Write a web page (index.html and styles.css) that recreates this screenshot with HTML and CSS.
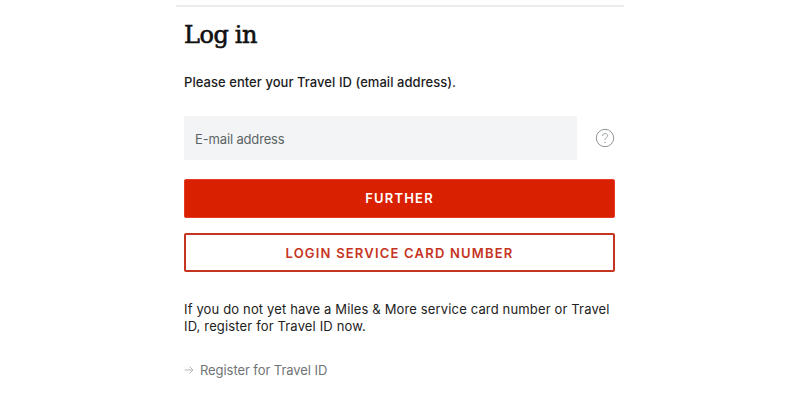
FILE: index.html
```html
<!DOCTYPE html>
<html lang="en">
<head>
<meta charset="utf-8">
<title>Log in</title>
<link rel="stylesheet" href="styles.css">
</head>
<body>
<main class="panel">
  <h1 class="title">Log in</h1>
  <p class="intro">Please enter your Travel ID (email address).</p>
  <div class="field-row">
    <div class="field">E-mail address</div>
    <svg class="help" width="20" height="20" viewBox="0 0 20 20" aria-hidden="true">
      <circle cx="10" cy="10" r="8.7" fill="none" stroke="#8f9494" stroke-width="1"/>
      <path d="M7.6 8c0-1.500 1.100-2.500 2.500-2.500s2.400 1 2.400 2.200c0 1.900-2.500 2-2.500 4.100" fill="none" stroke="#9a9e9e" stroke-width="1"/>
      <circle cx="10" cy="14.400" r=".7" fill="#8f9494"/>
    </svg>
  </div>
  <button class="btn primary">FURTHER</button>
  <button class="btn secondary">LOGIN SERVICE CARD NUMBER</button>
  <p class="note">If you do not yet have a Miles &amp; More service card number or Travel ID, register for Travel ID now.</p>
  <a class="link" href="#">
    <svg width="10" height="10" viewBox="0 0 10 10" aria-hidden="true"><path d="M0.500 5H9M5.500 1.500 9 5 5.500 8.500" fill="none" stroke="#b5b8b8" stroke-width="1"/></svg>
    <span>Register for Travel ID</span>
  </a>
</main>
</body>
</html>
```
FILE: styles.css
```css
* { box-sizing: border-box; }
html, body { margin: 0; height: 100%; background: #fff; overflow: hidden; }
body { font-family: Inter, "Liberation Sans", sans-serif; color: #1c1c1c; }
.panel {
  width: 448px;
  margin: 5px auto 0;
  padding: 0 8px;
  border-top: 2px solid #ececec;
}
.title {
  margin: 12px 0 0;
  font: 400 24px/32px "DejaVu Serif", serif;
  letter-spacing: -.4px;
  word-spacing: -1px;
  -webkit-text-stroke: .6px #111;
  color: #111;
}
.intro {
  margin: 22px 0 0;
  font-size: 13px;
  line-height: 18px;
  font-weight: 500;
  letter-spacing: .05px;
}
.field-row { display: flex; align-items: center; margin-top: 25px; gap: 18px; }
.field {
  width: 393px;
  height: 44px;
  padding-left: 11px;
  background: #f2f4f5;
  color: #5d6466;
  font-size: 13px;
  letter-spacing: -.15px;
  line-height: 46px;
}
.help { flex: none; }
.btn {
  display: block;
  width: 431px;
  height: 39px;
  border-radius: 2px;
  font-family: inherit;
  font-size: 13px;
  font-weight: 600;
  letter-spacing: 1.2px;
}
.primary { margin-top: 19px; padding-bottom: 3px; background: #d92001; border: 1px solid #e63a22; color: #fff; }
.secondary { margin-top: 15px; background: #fff; border: 2px solid #c5341f; color: #c5341f; }
.note {
  margin: 29px 0 0;
  font-size: 13px;
  line-height: 17px;
  letter-spacing: .15px;
  color: #222;
}
.link {
  display: flex;
  align-items: center;
  gap: 6px;
  margin-top: 26px;
  font-size: 13px;
  line-height: 18px;
  letter-spacing: -.07px;
  color: #6f7476;
  text-decoration: none;
}
```
